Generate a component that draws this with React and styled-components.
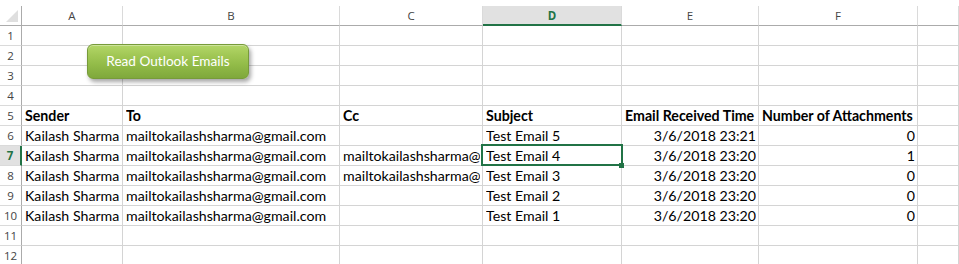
import React from "react";
import styled, { createGlobalStyle, css } from "styled-components";

const GlobalStyle = createGlobalStyle`
  html, body { margin: 0; padding: 0; background: #ffffff; overflow: hidden; }
  body { font-family: Lato, "Liberation Sans", sans-serif; }
`;

const GREEN = "#217346";
const GRID = "#d4d4d4";
const HEAD_LINE = "#ababab";

const Page = styled.div`
  position: relative;
  padding-top: 6px;
  width: 959px;
  height: 264px;
  box-sizing: border-box;
  overflow: hidden;
`;

const Sheet = styled.div`
  display: grid;
  grid-template-columns: 22px 101px 217px 143px 139px 137px 159px 1fr;
  grid-auto-rows: 20px;
`;

const Corner = styled.div`
  box-sizing: border-box;
  border-right: 1px solid ${HEAD_LINE};
  border-bottom: 1px solid ${HEAD_LINE};
  display: flex;
  align-items: flex-end;
  justify-content: flex-end;
  padding: 0 3px 3px 0;
`;

const ColHead = styled.div`
  box-sizing: border-box;
  border-right: 1px solid #dadada;
  border-bottom: 1px solid ${HEAD_LINE};
  display: flex;
  align-items: center;
  justify-content: center;
  font-family: "Open Sans", "Noto Sans", sans-serif;
  font-size: 11.5px;
  color: #444444;
  ${(p) =>
    p.$active &&
    css`
      background: #e1e1e1;
      border-bottom: 2px solid ${GREEN};
      color: ${GREEN};
      font-weight: 700;
    `}
`;

const RowHead = styled.div`
  box-sizing: border-box;
  border-right: 1px solid ${HEAD_LINE};
  border-bottom: 1px solid #dadada;
  display: flex;
  align-items: center;
  justify-content: center;
  font-family: "Open Sans", "Noto Sans", sans-serif;
  font-size: 11.5px;
  color: #444444;
  ${(p) =>
    p.$active &&
    css`
      background: #e1e1e1;
      border-right: 2px solid ${GREEN};
      color: ${GREEN};
      font-weight: 700;
    `}
`;

const Cell = styled.div`
  position: relative;
  box-sizing: border-box;
  border-right: 1px solid ${GRID};
  border-bottom: 1px solid ${GRID};
  padding: 0 2px 0 3px;
  font-size: 14.2px;
  line-height: 19px;
  color: #000000;
  white-space: nowrap;
  overflow: ${(p) => (p.$active ? "visible" : "hidden")};
  text-align: ${(p) => (p.$right ? "right" : "left")};
  font-weight: ${(p) => (p.$bold ? 700 : 400)};
`;

const Clip = styled.span`
  display: block;
  overflow: hidden;
  white-space: nowrap;
`;

const Selection = styled.div`
  position: absolute;
  left: -2px;
  top: -2px;
  width: 142px;
  height: 22px;
  box-sizing: border-box;
  border: 2px solid ${GREEN};
  pointer-events: none;
  z-index: 2;
`;

const Handle = styled.div`
  position: absolute;
  right: -3px;
  bottom: -4px;
  width: 5px;
  height: 5px;
  background: ${GREEN};
`;

const ShapeButton = styled.button`
  position: absolute;
  left: 87px;
  top: 44px;
  width: 162px;
  height: 35px;
  box-sizing: border-box;
  border: 1px solid #779b3a;
  border-radius: 6px;
  background: linear-gradient(
    to bottom,
    #b3d668 0%,
    #a2c856 30%,
    #92bb48 60%,
    #7fa83c 100%
  );
  box-shadow: 2px 3px 4px rgba(0, 0, 0, 0.35), inset 0 1px 0 rgba(255, 255, 255, 0.35);
  color: #ffffff;
  font-family: Lato, "Liberation Sans", sans-serif;
  font-size: 13.6px;
  padding: 0 0 2px 0;
  cursor: pointer;
  z-index: 3;
`;

const columns = ["A", "B", "C", "D", "E", "F", ""];

const rows = {
  5: [
    { t: "Sender", bold: true },
    { t: "To", bold: true },
    { t: "Cc", bold: true },
    { t: "Subject", bold: true },
    { t: "Email Received Time", bold: true },
    { t: "Number of Attachments", bold: true },
    { t: "" },
  ],
};

const data = [
  [6, "", "Test Email 5", "3/6/2018 23:21", "0"],
  [7, "mailtokailashsharma@gmail.com", "Test Email 4", "3/6/2018 23:20", "1"],
  [8, "mailtokailashsharma@gmail.com", "Test Email 3", "3/6/2018 23:20", "0"],
  [9, "", "Test Email 2", "3/6/2018 23:20", "0"],
  [10, "", "Test Email 1", "3/6/2018 23:20", "0"],
];

data.forEach(([r, cc, subj, time, att]) => {
  rows[r] = [
    { t: "Kailash Sharma" },
    { t: "mailtokailashsharma@gmail.com" },
    { t: cc },
    { t: subj },
    { t: time, right: true },
    { t: att, right: true },
    { t: "" },
  ];
});

const CornerMark = () => (
  <svg width="12" height="12" viewBox="0 0 12 12">
    <polygon points="12,0 12,12 0,12" fill="#dfdfdf" />
  </svg>
);

export default function App() {
  const rowNums = Array.from({ length: 12 }, (_, i) => i + 1);
  return (
    <>
      <GlobalStyle />
      <Page>
        <Sheet>
          <Corner>
            <CornerMark />
          </Corner>
          {columns.map((c, i) => (
            <ColHead key={i} $active={c === "D"}>
              {c}
            </ColHead>
          ))}
          {rowNums.map((r) => {
            const cells = rows[r] || columns.map(() => ({ t: "" }));
            return (
              <React.Fragment key={r}>
                <RowHead $active={r === 7}>{r}</RowHead>
                {cells.map((c, i) => {
                  const active = r === 7 && i === 3;
                  return (
                    <Cell key={i} $bold={c.bold} $right={c.right} $active={active}>
                      <Clip>{c.t}</Clip>
                      {active && (
                        <Selection>
                          <Handle />
                        </Selection>
                      )}
                    </Cell>
                  );
                })}
              </React.Fragment>
            );
          })}
        </Sheet>
        <ShapeButton type="button">Read Outlook Emails</ShapeButton>
      </Page>
    </>
  );
}
